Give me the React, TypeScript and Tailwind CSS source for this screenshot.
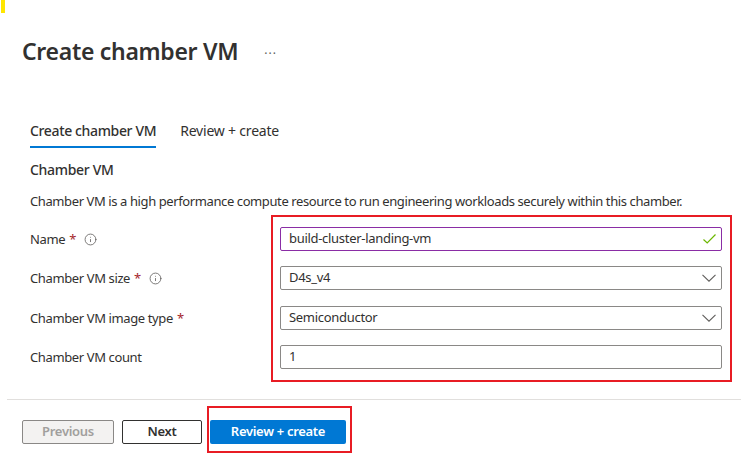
import { Info } from 'lucide-react';

const font = 'font-["Noto_Sans","Open_Sans",sans-serif]';

function Label({ text, required, info }: { text: string; required?: boolean; info?: boolean }) {
  return (
    <div className="flex w-[250px] shrink-0 items-center pt-px text-[13px] tracking-[-0.38px] text-[#323130]">
      <span>{text}</span>
      {required && <span className="ml-1 text-[#a4262c]">*</span>}
      {info && <Info className="ml-[8px] h-[13px] w-[13px] text-[#605e5c]" strokeWidth={1.5} />}
    </div>
  );
}

function Field({ value, kind }: { value: string; kind?: 'valid' | 'select' }) {
  return (
    <div
      className={`flex h-6 w-[442px] shrink-0 items-center justify-between rounded-[2px] border pl-2 pr-[5px] text-[13px] tracking-[-0.3px] text-[#323130] ${
        kind === 'valid' ? 'border-[#8a2da5]' : 'border-[#8a8886]'
      }`}
    >
      <span>{value}</span>
      {kind === 'valid' && (
        <svg width="13" height="10" viewBox="0 0 13 10" fill="none" stroke="#6bb700" strokeWidth="1.2">
          <path d="M0.5 5.5 L4.2 9 L12.5 0.5" />
        </svg>
      )}
      {kind === 'select' && (
        <svg width="14" height="8" viewBox="0 0 14 8" fill="none" stroke="#605e5c" strokeWidth="1.1">
          <path d="M0.5 0.8 L7 7.2 L13.5 0.8" />
        </svg>
      )}
    </div>
  );
}

export default function App() {
  return (
    <div className={`relative h-[457px] w-[741px] overflow-hidden bg-white ${font}`}>
      <div className="absolute left-[1px] top-0 h-[13px] w-[4px] bg-[#ffe600]" />

      <div className="flex items-center px-[22px] pt-[33px]">
        <h1 className="text-[23px] leading-9 font-semibold tracking-[-0.3px] text-[#323130]">Create chamber VM</h1>
        <span className="ml-[26px] mt-[5px] text-[12px] tracking-[1px] text-[#605e5c]">···</span>
      </div>

      <div className="pl-[30px] pt-[53px]">
        <div className="flex gap-6 text-[14px] text-[#323130]">
          <div className="h-[26px] border-b-2 border-[#0078d4] font-medium leading-[18px] tracking-[-0.36px]">Create chamber VM</div>
          <div className="leading-[18px] tracking-[-0.2px]">Review + create</div>
        </div>
        <h2 className="mt-[12px] text-[14px] leading-[20px] font-medium tracking-[-0.3px] text-[#323130]">Chamber VM</h2>
        <p className="mt-[11px] text-[13px] leading-[20px] tracking-[-0.4px] text-[#323130]">
          Chamber VM is a high performance compute resource to run engineering workloads securely within this chamber.
        </p>

        <div className="mt-[16px] flex flex-col gap-[15px]">
          <div className="flex">
            <Label text="Name" required info />
            <Field value="build-cluster-landing-vm" kind="valid" />
          </div>
          <div className="flex">
            <Label text="Chamber VM size" required info />
            <Field value="D4s_v4" kind="select" />
          </div>
          <div className="mt-px flex">
            <Label text="Chamber VM image type" required />
            <Field value="Semiconductor" kind="select" />
          </div>
          <div className="flex">
            <Label text="Chamber VM count" />
            <Field value="1" />
          </div>
        </div>
      </div>

      <div className="ml-[7px] mt-[30px] h-px bg-[#e1dfdd]" />

      <div className="flex gap-2 px-[22px] pt-[20px] text-[13px] font-semibold tracking-[-0.3px]">
        <button className="h-6 w-[92px] rounded-[2px] border border-[#8a8886] bg-[#f3f2f1] text-[#a19f9d]">Previous</button>
        <button className="h-6 w-20 rounded-[2px] border border-[#323130] bg-white text-[#323130]">Next</button>
        <button className="h-6 w-[136px] rounded-[2px] bg-[#0078d4] text-white">Review + create</button>
      </div>

      <div className="absolute left-[271px] top-[215px] h-[167px] w-[461px] border-2 border-[#e81c24]" />
      <div className="absolute left-[207px] top-[406px] h-[47px] w-[145px] border-2 border-[#e81c24]" />
    </div>
  );
}
